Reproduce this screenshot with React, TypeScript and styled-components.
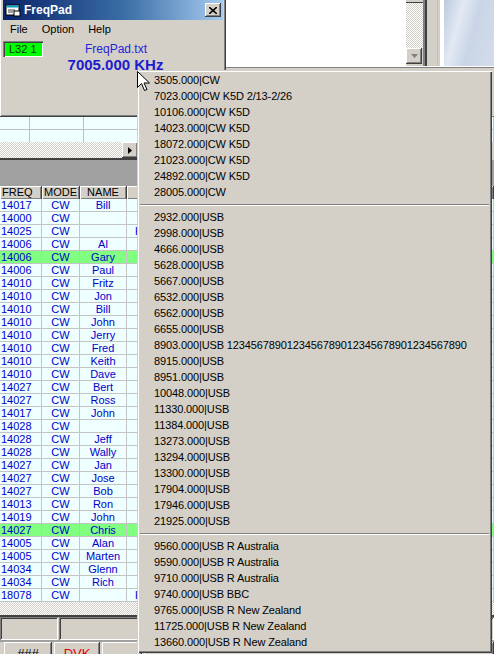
import React from 'react'
import styled, { createGlobalStyle } from 'styled-components'

const GlobalStyle = createGlobalStyle`
  html, body {
    margin: 0;
    padding: 0;
    background: #d4d0c8;
  }
  body {
    font-family: "Liberation Sans", Arial, sans-serif;
    font-size: 11px;
  }
`

const face = '#d4d0c8'
const hatch = `repeating-conic-gradient(${face} 0 25%, #ffffff 0 50%) 0 0 / 2px 2px`
const raised = `inset -1px -1px #404040, inset 1px 1px #ffffff, inset -2px -2px #808080, inset 2px 2px ${face}`
const sunken = `inset 1px 1px #808080, inset -1px -1px #ffffff`

type LogRow = { freq: string; name?: string; note?: string; hot?: boolean }

const LOG: LogRow[] = [
  { freq: '14017', name: 'Bill' },
  { freq: '14000' },
  { freq: '14025', note: 'H' },
  { freq: '14006', name: 'Al' },
  { freq: '14006', name: 'Gary', hot: true },
  { freq: '14006', name: 'Paul' },
  { freq: '14010', name: 'Fritz' },
  { freq: '14010', name: 'Jon' },
  { freq: '14010', name: 'Bill' },
  { freq: '14010', name: 'John' },
  { freq: '14010', name: 'Jerry' },
  { freq: '14010', name: 'Fred' },
  { freq: '14010', name: 'Keith' },
  { freq: '14010', name: 'Dave' },
  { freq: '14027', name: 'Bert' },
  { freq: '14027', name: 'Ross' },
  { freq: '14017', name: 'John' },
  { freq: '14028' },
  { freq: '14028', name: 'Jeff' },
  { freq: '14028', name: 'Wally' },
  { freq: '14027', name: 'Jan' },
  { freq: '14027', name: 'Jose' },
  { freq: '14027', name: 'Bob' },
  { freq: '14013', name: 'Ron' },
  { freq: '14019', name: 'John' },
  { freq: '14027', name: 'Chris', hot: true },
  { freq: '14005', name: 'Alan' },
  { freq: '14005', name: 'Marten' },
  { freq: '14034', name: 'Glenn' },
  { freq: '14034', name: 'Rich' },
  { freq: '18078', note: 'H' },
]

const MENU: string[][] = [
  [
    '3505.000|CW',
    '7023.000|CW K5D 2/13-2/26',
    '10106.000|CW K5D',
    '14023.000|CW K5D',
    '18072.000|CW K5D',
    '21023.000|CW K5D',
    '24892.000|CW K5D',
    '28005.000|CW',
  ],
  [
    '2932.000|USB',
    '2998.000|USB',
    '4666.000|USB',
    '5628.000|USB',
    '5667.000|USB',
    '6532.000|USB',
    '6562.000|USB',
    '6655.000|USB',
    '8903.000|USB 1234567890123456789012345678901234567890',
    '8915.000|USB',
    '8951.000|USB',
    '10048.000|USB',
    '11330.000|USB',
    '11384.000|USB',
    '13273.000|USB',
    '13294.000|USB',
    '13300.000|USB',
    '17904.000|USB',
    '17946.000|USB',
    '21925.000|USB',
  ],
  [
    '9560.000|USB R Australia',
    '9590.000|USB R Australia',
    '9710.000|USB R Australia',
    '9740.000|USB BBC',
    '9765.000|USB R New Zealand',
    '11725.000|USB R New Zealand',
    '13660.000|USB R New Zealand',
  ],
]

export default function App() {
  return (
    <>
      <GlobalStyle />
      <S.Desktop>
        <S.Logger>
          <S.TopPane>
            <S.TopRow>
              <S.Memo />
              <S.VScroll>
                <S.ScrollCap />
                <S.Track />
                <S.ArrowBtn>
                  <svg width="7" height="4" viewBox="0 0 7 4">
                    <path d="M0 0h7L3.5 4z" fill="#808080" />
                  </svg>
                </S.ArrowBtn>
              </S.VScroll>
              <S.Splitter />
              <S.Picture />
            </S.TopRow>
          </S.TopPane>

          <S.Strip>
            <S.StripRow>
              <S.StripCell $w={29} />
              <S.StripCell $w={53} />
              <S.StripCell />
            </S.StripRow>
            <S.StripRow>
              <S.StripCell $w={29} />
              <S.StripCell $w={53} />
              <S.StripCell />
            </S.StripRow>
          </S.Strip>
          <S.HScroll>
            <S.Track />
            <S.ArrowBtn>
              <svg width="4" height="7" viewBox="0 0 4 7">
                <path d="M0 0v7l4-3.5z" fill="#000" />
              </svg>
            </S.ArrowBtn>
          </S.HScroll>
          <S.GrayBand />

          <S.Grid>
            <S.HeadRow>
              <S.HeadCell $w={42} $align="left">FREQ</S.HeadCell>
              <S.HeadCell $w={38}>MODE</S.HeadCell>
              <S.HeadCell $w={47}>NAME</S.HeadCell>
              <S.HeadCell $w={90} />
              <S.HeadCell />
            </S.HeadRow>
            {LOG.map((r, i) => (
              <S.LogLine key={i} $hot={r.hot}>
                <S.Cell $w={42} $align="left">{r.freq}</S.Cell>
                <S.Cell $w={38}>CW</S.Cell>
                <S.Cell $w={47}>{r.name}</S.Cell>
                <S.Cell $w={90} $align="left">{r.note}</S.Cell>
                <S.Cell />
              </S.LogLine>
            ))}
          </S.Grid>
          <S.HatchFill />

          <S.StatusRow>
            <S.Panel $w={58} />
            <S.Panel $w={80} />
            <S.Panel />
          </S.StatusRow>
          <S.ButtonRow>
            <S.KeyBtn $w={48}>###</S.KeyBtn>
            <S.KeyBtn $w={46} $red>DVK</S.KeyBtn>
            <S.KeyBtn $w={40} />
            <S.KeyBtn />
          </S.ButtonRow>
        </S.Logger>

        <S.Window>
          <S.TitleBar>
            <svg width="16" height="14" viewBox="0 0 16 14">
              <rect x="1" y="2" width="13" height="10" fill="#ffffff" stroke="#000" />
              <rect x="1.5" y="2.5" width="12" height="2" fill="#00a0c0" />
              <path d="M3 7h7M3 9h5" stroke="#404040" />
              <rect x="9" y="8" width="6" height="5" fill="#ffffff" stroke="#000" />
            </svg>
            <S.TitleText>FreqPad</S.TitleText>
            <S.CloseBtn>
              <svg width="8" height="7" viewBox="0 0 8 7">
                <path d="M0 0l8 7M8 0L0 7" stroke="#000" strokeWidth="1.6" />
              </svg>
            </S.CloseBtn>
          </S.TitleBar>
          <S.MenuBar>
            <S.MenuBarItem>File</S.MenuBarItem>
            <S.MenuBarItem>Option</S.MenuBarItem>
            <S.MenuBarItem>Help</S.MenuBarItem>
          </S.MenuBar>
          <S.Body>
            <S.Lcd>L32 1</S.Lcd>
            <S.FileName>FreqPad.txt</S.FileName>
            <S.Freq>7005.000 KHz</S.Freq>
          </S.Body>
        </S.Window>

        <S.Popup>
          {MENU.map((group, gi) => (
            <React.Fragment key={gi}>
              {gi > 0 && <S.Separator />}
              {group.map(item => (
                <S.PopupItem key={item}>{item}</S.PopupItem>
              ))}
            </React.Fragment>
          ))}
        </S.Popup>

        <S.Cursor width="13" height="21" viewBox="0 0 13 21">
          <path d="M0.5 0.5v16l4-4 3 7 2.5-1-3-6.5h5.5z" fill="#ffffff" stroke="#000" strokeLinejoin="miter" />
        </S.Cursor>
      </S.Desktop>
    </>
  )
}

const S = {
  Desktop: styled.div`
    position: relative;
    width: 494px;
    height: 654px;
    overflow: hidden;
    background: ${face};
  `,
  Logger: styled.div`
    display: flex;
    flex-direction: column;
    width: 494px;
  `,
  TopPane: styled.div`
    height: 117px;
    background: ${face};
    border-bottom: 1px solid #808080;
    box-sizing: border-box;
  `,
  TopRow: styled.div`
    display: flex;
    height: 66px;
    border-bottom: 1px solid #ffffff;
    box-shadow: 0 1px 0 #808080;
  `,
  Memo: styled.div`
    flex: 1;
    background: #ffffff;
  `,
  VScroll: styled.div`
    width: 17px;
    display: flex;
    flex-direction: column;
    padding-bottom: 2px;
  `,
  ScrollCap: styled.div`
    height: 2px;
    background: ${face};
    border-bottom: 1px solid #404040;
  `,
  Track: styled.div`
    flex: 1;
    background: ${hatch};
  `,
  ArrowBtn: styled.div`
    width: 16px;
    height: 16px;
    box-sizing: border-box;
    flex-shrink: 0;
    background: ${face};
    box-shadow: ${raised};
    display: flex;
    align-items: center;
    justify-content: center;
  `,
  Splitter: styled.div`
    width: 21px;
    background: ${face};
    box-shadow: inset 3px 0 0 -1px #808080, inset 4px 0 #404040, inset -4px 0 #ffffff, inset -6px 0 ${face}, inset -7px 0 #c0c0c0;
  `,
  Picture: styled.div`
    width: 50px;
    background: linear-gradient(105deg, #bccadf 0%, #e2e9f3 30%, #c9d5e7 55%, #d3dcea 100%);
  `,
  Strip: styled.div`
    height: 25px;
    background: #effefe;
  `,
  StripRow: styled.div`
    display: flex;
    height: 12px;
    border-bottom: 1px solid #c0c0c0;
    &:last-child {
      border-bottom: none;
    }
  `,
  StripCell: styled.div<{ $w?: number }>`
    ${p => (p.$w ? `width: ${p.$w}px;` : 'flex: 1;')}
    border-right: 1px solid #c0c0c0;
  `,
  HScroll: styled.div`
    display: flex;
    width: 138px;
    height: 16px;
    border-bottom: 2px solid #404040;
  `,
  GrayBand: styled.div`
    height: 26px;
    background: #a0a0a0;
  `,
  Grid: styled.div`
    display: flex;
    flex-direction: column;
  `,
  HeadRow: styled.div`
    display: flex;
    height: 13px;
    background: ${face};
  `,
  HeadCell: styled.div<{ $w?: number; $align?: string }>`
    ${p => (p.$w ? `width: ${p.$w}px;` : 'flex: 1;')}
    box-sizing: border-box;
    padding: 0 2px;
    text-align: ${p => p.$align || 'center'};
    line-height: 13px;
    color: #000;
    border-right: 1px solid #404040;
    box-shadow: inset 1px 1px #ffffff, inset -1px -1px #808080;
  `,
  LogLine: styled.div<{ $hot?: boolean }>`
    display: flex;
    height: 13px;
    box-sizing: border-box;
    background: ${p => (p.$hot ? '#80ff80' : '#effefe')};
    border-bottom: 1px solid #c4c4c4;
  `,
  Cell: styled.div<{ $w?: number; $align?: string }>`
    ${p => (p.$w ? `width: ${p.$w}px;` : 'flex: 1;')}
    box-sizing: border-box;
    padding: 0 1px 0 8px;
    ${p => (p.$align === 'left' && p.$w === 42 ? 'padding-left: 1px;' : '')}
    text-align: ${p => p.$align || 'center'};
    line-height: 12px;
    color: #0000cc;
    white-space: nowrap;
    overflow: hidden;
    border-right: 1px solid #c4c4c4;
    ${p => (p.$align ? '' : 'padding-left: 1px;')}
  `,
  HatchFill: styled.div`
    height: 13px;
    background: ${hatch};
    border-bottom: 2px solid #404040;
  `,
  StatusRow: styled.div`
    display: flex;
    height: 23px;
    gap: 1px;
    border-bottom: 2px solid #a0a0a0;
  `,
  Panel: styled.div<{ $w?: number }>`
    ${p => (p.$w ? `width: ${p.$w}px;` : 'flex: 1;')}
    box-sizing: border-box;
    background: ${face};
    box-shadow: ${sunken}, inset 2px 2px #404040;
  `,
  ButtonRow: styled.div`
    display: flex;
    gap: 2px;
    padding-left: 4px;
    height: 24px;
  `,
  KeyBtn: styled.div<{ $w?: number; $red?: boolean }>`
    ${p => (p.$w ? `width: ${p.$w}px;` : 'flex: 1;')}
    box-sizing: border-box;
    background: ${face};
    box-shadow: ${raised};
    text-align: center;
    font-size: 13px;
    line-height: 22px;
    padding-top: 1px;
    color: ${p => (p.$red ? '#e00000' : '#000')};
  `,
  Window: styled.div`
    position: absolute;
    left: 0;
    top: -3px;
    width: 226px;
    height: 120px;
    box-sizing: border-box;
    padding: 3px;
    background: ${face};
    box-shadow: ${raised};
    display: flex;
    flex-direction: column;
  `,
  TitleBar: styled.div`
    height: 20px;
    display: flex;
    align-items: center;
    padding: 0 2px 0 2px;
    background: linear-gradient(90deg, #0a246a 0%, #3a6ea5 55%, #a6caf0 100%);
  `,
  TitleText: styled.span`
    flex: 1;
    margin-left: 3px;
    color: #ffffff;
    font-weight: bold;
    font-size: 12px;
  `,
  CloseBtn: styled.div`
    width: 16px;
    height: 14px;
    box-sizing: border-box;
    background: ${face};
    box-shadow: ${raised};
    display: flex;
    align-items: center;
    justify-content: center;
  `,
  MenuBar: styled.div`
    display: flex;
    height: 18px;
    align-items: center;
  `,
  MenuBarItem: styled.span`
    padding: 0 7px;
    font-size: 11px;
    color: #000;
  `,
  Body: styled.div`
    display: grid;
    grid-template-columns: 1fr auto 1fr;
    grid-template-rows: 16px 16px;
    margin-top: 3px;
  `,
  Lcd: styled.div`
    justify-self: start;
    width: 40px;
    height: 16px;
    box-sizing: border-box;
    padding-left: 6px;
    background: #00ff00;
    box-shadow: inset 1px 1px #808080, inset 2px 2px #404040, inset -1px -1px #ffffff;
    line-height: 16px;
    color: #003300;
    font-size: 11px;
  `,
  FileName: styled.div`
    color: #2626d9;
    font-size: 12px;
    line-height: 16px;
    margin-left: 6px;
  `,
  Freq: styled.div`
    grid-column: 1 / -1;
    justify-self: center;
    color: #1c1cd0;
    font-weight: bold;
    font-size: 15px;
    line-height: 16px;
    margin-left: 5px;
  `,
  Popup: styled.div`
    position: absolute;
    left: 137px;
    top: 70px;
    width: 355px;
    box-sizing: border-box;
    padding: 2px 2px 3px 2px;
    background: ${face};
    box-shadow: inset 1px 1px ${face}, inset 2px 2px #ffffff, inset -1px -1px #404040, inset -2px -2px #808080;
  `,
  PopupItem: styled.div`
    height: 16px;
    line-height: 16px;
    padding-left: 15px;
    font-size: 11px;
    letter-spacing: -0.12px;
    color: #000;
    white-space: nowrap;
  `,
  Separator: styled.div`
    height: 9px;
    margin: 0 1px;
    display: flex;
    flex-direction: column;
    justify-content: center;
    &::before {
      content: '';
      display: block;
      height: 1px;
      background: #808080;
      border-bottom: 1px solid #ffffff;
    }
  `,
  Cursor: styled.svg`
    position: absolute;
    left: 137px;
    top: 71px;
  `,
}
